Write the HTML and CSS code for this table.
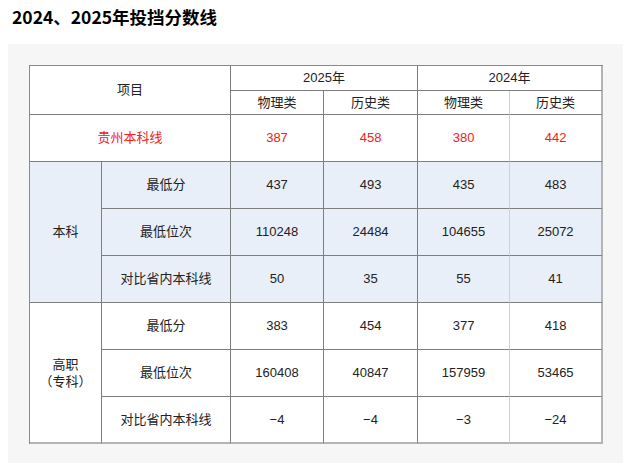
FILE: index.html
```html
<!DOCTYPE html>
<html lang="zh-CN">
<head>
<meta charset="utf-8">
<title>2024、2025年投挡分数线</title>
<link rel="stylesheet" href="styles.css">
</head>
<body>
<h1 class="title">2024、2025年投挡分数线</h1>
<div class="panel">
  <table class="score">
    <colgroup>
      <col class="c1"><col class="c2"><col class="c3"><col class="c4"><col class="c5"><col class="c6">
    </colgroup>
    <tr class="h1">
      <td colspan="2" rowspan="2">项目</td>
      <td colspan="2">2025年</td>
      <td colspan="2" class="last">2024年</td>
    </tr>
    <tr class="h2">
      <td>物理类</td><td>历史类</td><td class="soft">物理类</td><td class="last">历史类</td>
    </tr>
    <tr class="row red">
      <td colspan="2">贵州本科线</td><td>387</td><td>458</td><td class="soft">380</td><td class="last">442</td>
    </tr>
    <tr class="row blue">
      <td rowspan="3">本科</td><td>最低分</td><td>437</td><td>493</td><td class="soft">435</td><td class="last">483</td>
    </tr>
    <tr class="row blue">
      <td>最低位次</td><td>110248</td><td>24484</td><td class="soft">104655</td><td class="last">25072</td>
    </tr>
    <tr class="row blue">
      <td>对比省内本科线</td><td>50</td><td>35</td><td class="soft">55</td><td class="last">41</td>
    </tr>
    <tr class="row">
      <td rowspan="3" class="bottom"><span class="stack">高职<br>（专科）</span></td><td>最低分</td><td>383</td><td>454</td><td class="soft">377</td><td class="last">418</td>
    </tr>
    <tr class="row">
      <td>最低位次</td><td>160408</td><td>40847</td><td class="soft">157959</td><td class="last">53465</td>
    </tr>
    <tr class="row final">
      <td>对比省内本科线</td><td>−4</td><td>−4</td><td class="soft">−3</td><td class="last">−24</td>
    </tr>
  </table>
</div>
</body>
</html>
```
FILE: styles.css
```css
html, body {
  margin: 0;
  padding: 0;
  background: #ffffff;
}
body {
  font-family: "Liberation Sans", "Noto Sans CJK SC", sans-serif;
  color: #222;
}
.title {
  margin: 0;
  padding: 5px 0 0 12px;
  height: 39px;
  box-sizing: border-box;
  font-family: "Noto Sans CJK SC", sans-serif;
  font-size: 17.5px;
  line-height: 24px;
  font-weight: 700;
  color: #000;
}
.panel {
  margin-left: 8px;
  margin-top: 5px;
  width: 615px;
  height: 419px;
  box-sizing: border-box;
  padding: 21px;
  background: #f6f6f6;
}
.score {
  border-collapse: separate;
  border-spacing: 0;
  table-layout: fixed;
  width: 573px;
  background: #fff;
  border-top: 1px solid #8a8a8a;
  border-left: 1px solid #8a8a8a;
  font-size: 13px;
}
.c1 { width: 72px; }
.c2 { width: 129px; }
.c3 { width: 93px; }
.c4 { width: 94px; }
.c5 { width: 92px; }
.c6 { width: 93px; }
.score td {
  padding: 0;
  text-align: center;
  vertical-align: middle;
  border-right: 1px solid #7e7e7e;
  border-bottom: 1px solid #7e7e7e;
  line-height: 16px;
  color: #222;
}
.score td.soft {
  border-right: 1px solid #cdd1d8;
}
.score td.last {
  border-right: 2px solid #b4b4b4;
}
.h1 { height: 25px; }
.h2 { height: 24px; }
.row { height: 47px; }
.red td { color: #ef2020; }
.blue td { background: #e9eff8; }
.final td, .score td.bottom {
  border-bottom: 2px solid #b4b4b4;
}
.stack {
  display: inline-block;
  line-height: 17px;
}
```
